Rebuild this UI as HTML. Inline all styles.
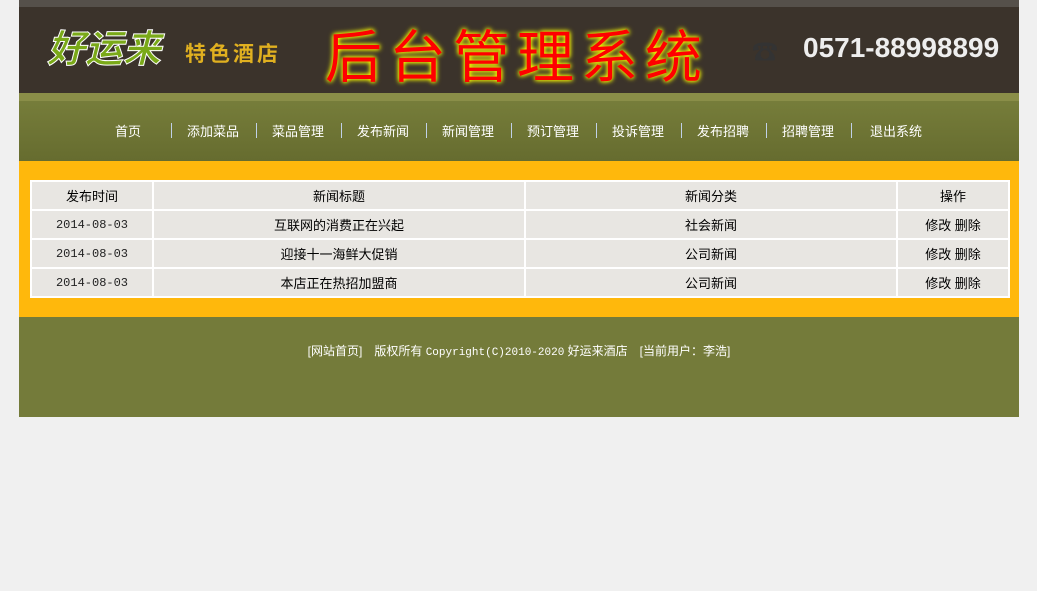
<!DOCTYPE html>
<html><head><meta charset="utf-8"><style>
body{margin:0;background:#f0f0f0;font-family:"Liberation Sans","Noto Sans CJK SC",sans-serif;font-size:12px;}
#w{position:absolute;left:19px;top:0;width:1000px;}
#hd{position:relative;height:93px;background:#3b332b;overflow:hidden}
#hd .top{position:absolute;left:0;top:0;width:1000px;height:7px;background:#55504a}
.t{position:absolute;white-space:nowrap;font-weight:bold}
#band{height:8px;background:#8a8e48}
#nav{height:60px;background:linear-gradient(#767d3a,#666c2f);position:relative;color:#fff;font-size:13px}
#nav span{position:absolute;top:20px;transform:translateX(-50%);white-space:nowrap}
#nav i{position:absolute;top:22px;width:1px;height:15px;background:#c0d0e8}
#y{height:156px;background:#ffb80c;position:relative}
table{position:absolute;left:11px;top:19px;border-collapse:collapse;width:980px;table-layout:fixed}
tr{height:29px}
td{border:2px solid #fff;background:#e8e6e2;text-align:center;font-size:13px;color:#000;padding:0}
td.d{font-family:"Liberation Mono",monospace;font-size:12px;color:#222}
#ft{height:100px;background:#747b3a;color:#fff;font-size:12px;text-align:center}
#ft div{padding-top:25px}
</style></head><body><div id="w">
<div id="hd"><div class="top"></div>
<div class="t" style="left:28px;top:18px;font-size:38px;color:#7aa918;-webkit-text-stroke:1px #fff;font-style:italic">好运来</div>
<div class="t" style="left:166px;top:38px;font-size:21px;color:#e0b020;letter-spacing:3px">特色酒店</div>
<div class="t" style="left:306px;top:12px;font-size:57px;font-weight:normal;color:#f00;text-shadow:0 0 4px #ff0,0 0 6px #ff0;letter-spacing:7px">后台管理系统</div>
<div class="t" style="left:733px;top:32px;font-size:26px;color:#333">☎</div>
<div class="t" style="left:784px;top:32px;font-size:28px;color:#eee;font-family:'Liberation Sans',sans-serif">0571-88998899</div>
</div>
<div id="band"></div>
<div id="nav">
<span style="left:109px">首页</span><i style="left:152px"></i>
<span style="left:194px">添加菜品</span><i style="left:237px"></i>
<span style="left:279px">菜品管理</span><i style="left:322px"></i>
<span style="left:364px">发布新闻</span><i style="left:407px"></i>
<span style="left:449px">新闻管理</span><i style="left:492px"></i>
<span style="left:534px">预订管理</span><i style="left:577px"></i>
<span style="left:619px">投诉管理</span><i style="left:662px"></i>
<span style="left:704px">发布招聘</span><i style="left:747px"></i>
<span style="left:789px">招聘管理</span><i style="left:832px"></i>
<span style="left:877px">退出系统</span>
</div>
<div id="y"><table>
<tr><td style="width:120px">发布时间</td><td style="width:370px">新闻标题</td><td style="width:370px">新闻分类</td><td>操作</td></tr>
<tr><td class="d">2014-08-03</td><td>互联网的消费正在兴起</td><td>社会新闻</td><td>修改 删除</td></tr>
<tr><td class="d">2014-08-03</td><td>迎接十一海鲜大促销</td><td>公司新闻</td><td>修改 删除</td></tr>
<tr><td class="d">2014-08-03</td><td>本店正在热招加盟商</td><td>公司新闻</td><td>修改 删除</td></tr>
</table></div>
<div id="ft"><div>[网站首页]　版权所有 <span style="font-family:'Liberation Mono',monospace;font-size:11px">Copyright(C)2010-2020</span> 好运来酒店　[当前用户：李浩]</div></div>
</div></body></html>
